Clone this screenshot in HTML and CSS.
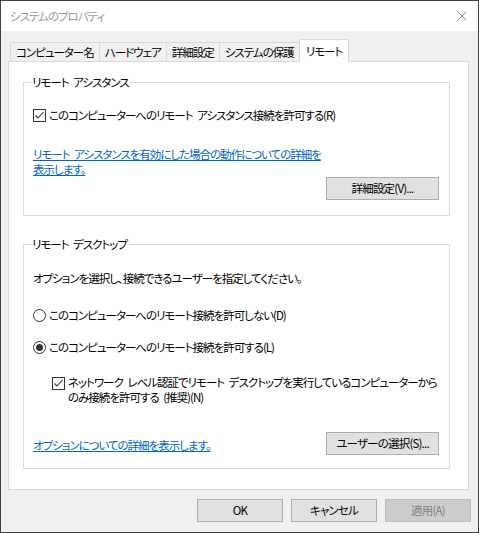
FILE: index.html
```html
<!DOCTYPE html>
<html lang="ja">
<head>
    <meta charset="UTF-8">
    <meta name="viewport" content="width=device-width, initial-scale=1.0">
    <title>システムのプロパティ</title>
    <link rel="stylesheet" href="styles.css">
</head>
<body>
    <div class="window">
        <div class="titlebar">
            <span class="title">システムのプロパティ</span>
            <span class="close">
                <svg width="10" height="10" viewBox="0 0 10 10"><path d="M0.5 0.5 L9.5 9.5 M9.5 0.5 L0.5 9.5" stroke="#8c8c8c" stroke-width="1" fill="none"/></svg>
            </span>
        </div>

        <div class="content">
            <!-- タブ -->
            <div class="tabs">
                <div class="tab">コンピューター名</div>
                <div class="tab">ハードウェア</div>
                <div class="tab">詳細設定</div>
                <div class="tab">システムの保護</div>
                <div class="tab active">リモート</div>
            </div>

            <div class="panel">
                <!-- リモート アシスタンス -->
                <div class="group group-assist">
                    <div class="group-title">リモート アシスタンス</div>
                    <div class="row check-row">
                        <span class="check"><svg width="11" height="11" viewBox="0 0 11 11"><path d="M1.5 5.5 L4 8 L9.5 2" stroke="#333" stroke-width="1.1" fill="none"/></svg></span>
                        <span>このコンピューターへのリモート アシスタンス接続を許可する(R)</span>
                    </div>
                    <a class="link link-assist" href="#">リモート アシスタンスを有効にした場合の動作についての詳細を<br>表示します。</a>
                    <div class="btn-row">
                        <button class="btn btn-wide">詳細設定(V)...</button>
                    </div>
                </div>

                <!-- リモート デスクトップ -->
                <div class="group group-desktop">
                    <div class="group-title">リモート デスクトップ</div>
                    <div class="desc">オプションを選択し、接続できるユーザーを指定してください。</div>
                    <div class="row radio-row first">
                        <span class="radio"></span>
                        <span>このコンピューターへのリモート接続を許可しない(D)</span>
                    </div>
                    <div class="row radio-row second">
                        <span class="radio checked"></span>
                        <span>このコンピューターへのリモート接続を許可する(L)</span>
                    </div>
                    <div class="row nested">
                        <span class="check"><svg width="11" height="11" viewBox="0 0 11 11"><path d="M1.5 5.5 L4 8 L9.5 2" stroke="#333" stroke-width="1.1" fill="none"/></svg></span>
                        <span>ネットワーク レベル認証でリモート デスクトップを実行しているコンピューターから<br>のみ接続を許可する (推奨)(N)</span>
                    </div>
                    <div class="bottom-row">
                        <a class="link" href="#">オプションについての詳細を表示します。</a>
                        <button class="btn btn-wide">ユーザーの選択(S)...</button>
                    </div>
                </div>
            </div>

            <div class="dialog-buttons">
                <button class="btn">OK</button>
                <button class="btn">キャンセル</button>
                <button class="btn" disabled>適用(A)</button>
            </div>
        </div>
    </div>
</body>
</html>
```

FILE: styles.css
```css
body {
    margin: 0;
    font-family: "Noto Sans CJK JP", "Noto Sans", sans-serif;
    font-size: 11.5px;
    line-height: 15px;
    letter-spacing: -1px;
    word-spacing: 3px;
    font-feature-settings: "palt";
    color: #000;
    background-color: #fff;
}
.window {
    width: 479px;
    height: 533px;
    box-sizing: border-box;
    border: 1px solid #404040;
    background-color: #f0f0f0;
    display: flex;
    flex-direction: column;
    white-space: nowrap;
}

/* タイトルバー */
.titlebar {
    height: 30px;
    flex: none;
    background-color: #fff;
    display: flex;
    align-items: center;
    justify-content: space-between;
    padding: 0 10px 0 9px;
}
.title {
    color: #9a9a9a;
}
.close {
    display: flex;
    margin-right: 1px;
}

.content {
    padding: 8px 7px 0 7px;
}

/* タブ */
.tabs {
    display: flex;
    align-items: flex-end;
    height: 22px;
    margin-left: 2px;
}
.tab {
    height: 19px;
    box-sizing: border-box;
    border: 1px solid #d9d9d9;
    border-bottom: none;
    margin-left: -1px;
    padding: 0 5px;
    line-height: 18px;
    background-color: #f0f0f0;
}
.tab:first-child {
    margin-left: 0;
}
.tab.active {
    height: 23px;
    margin-bottom: -1px;
    padding: 2px 6px 0 6px;
    line-height: 19px;
    background-color: #fff;
    position: relative;
    z-index: 1;
}

.panel {
    width: 461px;
    box-sizing: border-box;
    border: 1px solid #d9d9d9;
    background-color: #fff;
    padding: 20px 18px 20px 14px;
}

/* グループボックス */
.group {
    border: 1px solid #dcdcdc;
    padding: 0 10px 15px 9px;
}
.group-desktop {
    margin-top: 28px;
    padding-bottom: 13px;
}
.group-title {
    width: fit-content;
    margin: -8px 0 0 -2px;
    padding: 0 1px;
    background-color: #fff;
}

.row {
    display: flex;
    align-items: center;
    gap: 3px;
}
.check-row {
    margin-top: 18px;
}
.check {
    width: 13px;
    height: 13px;
    box-sizing: border-box;
    border: 1px solid #333;
    background-color: #fff;
    display: flex;
    flex: none;
}
.radio {
    width: 13px;
    height: 13px;
    box-sizing: border-box;
    border: 1px solid #333;
    border-radius: 50%;
    background-color: #fff;
    display: flex;
    align-items: center;
    justify-content: center;
    flex: none;
}
.radio.checked::after {
    content: "";
    width: 7px;
    height: 7px;
    border-radius: 50%;
    background-color: #333;
}

.link {
    display: block;
    color: #0066cc;
    text-decoration: underline;
}
.link-assist {
    margin-top: 24px;
}
.btn-row {
    display: flex;
    justify-content: flex-end;
}

.desc {
    margin-top: 19px;
}
.radio-row.first {
    margin-top: 22px;
}
.radio-row.second {
    margin-top: 17px;
}
.nested {
    margin: 20px 0 0 19px;
    align-items: flex-start;
}
.nested .check {
    margin-top: 2px;
}
.bottom-row {
    margin-top: 27px;
    display: flex;
    justify-content: space-between;
    align-items: center;
}
.bottom-row .link {
    margin-top: 4px;
}

/* ボタン */
.btn {
    width: 86px;
    height: 23px;
    box-sizing: border-box;
    border: 1px solid #adadad;
    background-color: #e1e1e1;
    font-family: inherit;
    font-size: 11.5px;
    letter-spacing: -0.8px;
    font-feature-settings: "palt";
    color: #000;
    padding: 0;
    line-height: 21px;
}
.btn-wide {
    width: 113px;
}
.btn:disabled {
    background-color: #cccccc;
    border-color: #bfbfbf;
    color: #838383;
}
.dialog-buttons {
    display: flex;
    justify-content: flex-end;
    gap: 8px;
    margin-top: 9px;
}
```
